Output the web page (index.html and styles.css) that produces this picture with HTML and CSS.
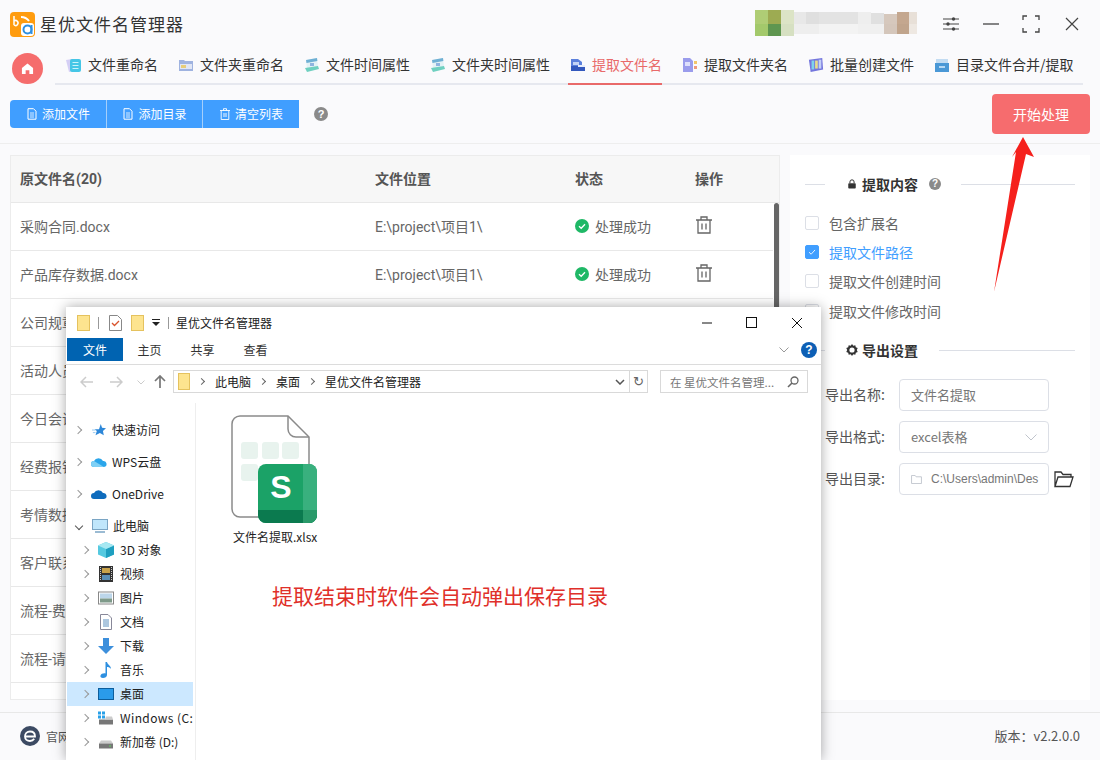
FILE: index.html
```html
<!DOCTYPE html>
<html lang="zh">
<head>
<meta charset="utf-8">
<title>星优文件名管理器</title>
<link rel="stylesheet" href="styles.css">
</head>
<body>
<div class="app">
  <header class="titlebar">
    <svg class="logo" viewBox="0 0 25 25"><rect width="25" height="25" rx="4" fill="#ff9c0f"/><rect x="11" y="11" width="13" height="13" rx="3" fill="#fff"/><circle cx="17.5" cy="17.5" r="4" fill="none" stroke="#2f8fe0" stroke-width="2"/><path d="M21.5 13v9" stroke="#2f8fe0" stroke-width="2"/><path d="M4 4v9M4 9a2.500 2.500 0 1 1 0 4" stroke="#fff" stroke-width="1.500" fill="none"/><path d="M11 5q5 0 8 4" stroke="#fff" stroke-width="2" fill="none"/></svg>
    <span class="app-name">星优文件名管理器</span>
    <svg class="mosaic" viewBox="0 0 151 26" preserveAspectRatio="none" shape-rendering="crispEdges">
      <rect x="0" y="0" width="12" height="14" fill="#afcd75"/><rect x="12" y="0" width="12" height="14" fill="#9dab52"/><rect x="24" y="0" width="12" height="14" fill="#dce4c6"/><rect x="36" y="2" width="12" height="12" fill="#e8e8e8"/><rect x="48" y="2" width="12" height="12" fill="#dfdfdf"/><rect x="60" y="2" width="36" height="12" fill="#e3e3e3"/><rect x="96" y="2" width="12" height="12" fill="#eeeeee"/><rect x="108" y="3" width="12" height="11" fill="#e0e0e0"/><rect x="120" y="4" width="12" height="10" fill="#d6c8bd"/><rect x="132" y="2" width="12" height="12" fill="#c4a78f"/><rect x="144" y="2" width="7" height="12" fill="#e8e0d8"/>
      <rect x="0" y="14" width="12" height="12" fill="#a3c96b"/><rect x="12" y="14" width="12" height="12" fill="#5f9650"/><rect x="24" y="14" width="12" height="12" fill="#d6e0c2"/><rect x="36" y="14" width="24" height="10" fill="#eeeeee"/><rect x="60" y="14" width="36" height="10" fill="#f3f3f3"/><rect x="96" y="14" width="24" height="10" fill="#f0f0f0"/><rect x="120" y="14" width="12" height="10" fill="#d4c6bb"/><rect x="132" y="14" width="12" height="10" fill="#c0a48c"/><rect x="144" y="14" width="7" height="10" fill="#eee8e2"/>
    </svg>
    <svg class="win-btn sliders" viewBox="0 0 16 16"><path d="M0 3h16M0 8h16M0 13h16" stroke="#444" stroke-width="1.200"/><circle cx="10.500" cy="3" r="1.700" fill="#444"/><circle cx="5" cy="8" r="1.700" fill="#444"/><circle cx="10.500" cy="13" r="1.700" fill="#444"/></svg>
    <svg class="win-btn minimize" viewBox="0 0 16 16"><path d="M0 8h16" stroke="#444" stroke-width="1.300"/></svg>
    <svg class="win-btn expand" viewBox="0 0 18 18"><path d="M5 1H1v4M13 1h4v4M5 17H1v-4M13 17h4v-4" fill="none" stroke="#444" stroke-width="1.300"/></svg>
    <svg class="win-btn closer" viewBox="0 0 14 14"><path d="M1 1l12 12M13 1L1 13" stroke="#444" stroke-width="1.200"/></svg>
  </header>

  <nav class="tabbar">
    <div class="home"><svg viewBox="0 0 14 14" class="home-icon"><path d="M7 1.500L13 6.500V13H9V9H5v4H1V6.500Z" fill="#fff"/></svg></div>
    <div class="tabs">
      <a class="tab"><svg class="tab-icon" viewBox="0 0 16 16"><path d="M0 3l6-1 1 12-4 1Z" fill="#d5cff5"/><rect x="4" y="2" width="11" height="13" rx="2" fill="#45c6e6"/><path d="M6.500 5.500h6M6.500 8.500h6M6.500 11.500h6" stroke="#c9f3fb" stroke-width="1"/></svg>文件重命名</a>
      <a class="tab"><svg class="tab-icon" viewBox="0 0 16 16"><path d="M1 3h5l1 1h8v10H1Z" fill="#9fb3e0"/><rect x="2" y="7" width="12" height="5" fill="#e0e6f5"/><rect x="3" y="8" width="5" height="3" fill="#e6cd7a"/></svg>文件夹重命名</a>
      <a class="tab"><svg class="tab-icon" viewBox="0 0 16 16"><path d="M2 3l11-2 1 9-11 2Z" fill="#e4f2f6"/><path d="M2 3l11-2 .4 3L2.500 6Z" fill="#6fb0d4"/><path d="M1 11l13-2 1 3-12 3Z" fill="#6fd0c0"/><rect x="6" y="6" width="4" height="3" fill="#8fb4df"/></svg>文件时间属性</a>
      <a class="tab"><svg class="tab-icon" viewBox="0 0 16 16"><path d="M2 3l11-2 1 9-11 2Z" fill="#e4f2f6"/><path d="M2 3l11-2 .4 3L2.500 6Z" fill="#6fb0d4"/><path d="M1 11l13-2 1 3-12 3Z" fill="#6fd0c0"/><rect x="6" y="6" width="4" height="3" fill="#8fb4df"/></svg>文件夹时间属性</a>
      <a class="tab tab-on"><svg class="tab-icon" viewBox="0 0 16 16"><path d="M1 2h7l4 3v6H1Z" fill="#5b80dc"/><path d="M3 5h6v3H3Z" fill="#c3d3f6"/><path d="M1 9h14v5H1Z" fill="#3358bd"/><path d="M8 8h7v2H8Z" fill="#e6ecfb"/></svg>提取文件名</a>
      <a class="tab"><svg class="tab-icon" viewBox="0 0 16 16"><path d="M1 1h7l3 3v11H1Z" fill="#9a9cec"/><path d="M3 5h5v4H3Z" fill="#dddffb"/><rect x="12" y="4" width="3" height="3" fill="#f2c56a"/><rect x="12" y="9" width="3" height="3" fill="#ee9a7e"/></svg>提取文件夹名</a>
      <a class="tab"><svg class="tab-icon" viewBox="0 0 18 18"><path d="M1 3l15-2 1 13-14 3Z" fill="#7476dd"/><rect x="4" y="4" width="3" height="10" fill="#7fd3ea"/><rect x="8" y="4" width="3" height="9" fill="#e8dc8c"/><rect x="12" y="3" width="3" height="10" fill="#c3d0f7"/></svg>批量创建文件</a>
      <a class="tab"><svg class="tab-icon" viewBox="0 0 16 16"><path d="M2 2h12v5H2Z" fill="#c3dcf2"/><path d="M1 6h14v9H1Z" fill="#4a98d6"/><rect x="5" y="9" width="6" height="2" fill="#b5d8f4"/></svg>目录文件合并/提取</a>
    </div>
  </nav>

  <section class="toolbar">
    <div class="btn-group">
      <button class="tool-btn"><svg class="btn-icon" viewBox="0 0 12 12"><path d="M2 .700h5.500L10 3.200v8H2Z" fill="none" stroke="#fff"/><path d="M4 5h4M4 7h4M4 9h4" stroke="#fff" stroke-width=".8"/></svg>添加文件</button>
      <button class="tool-btn"><svg class="btn-icon" viewBox="0 0 12 12"><path d="M2 .700h5.500L10 3.200v8H2Z" fill="none" stroke="#fff"/><path d="M4 5h4M4 7h4M4 9h4" stroke="#fff" stroke-width=".8"/></svg>添加目录</button>
      <button class="tool-btn"><svg class="btn-icon" viewBox="0 0 12 12"><path d="M1 2.500h10M4.500 2.500V.700h3v1.800M2.200 2.500v9h7.600v-9M5 5v4M7 5v4" fill="none" stroke="#fff" stroke-width=".9"/></svg>清空列表</button>
    </div>
    <span class="help-dot">?</span>
    <button class="start-btn">开始处理</button>
  </section>

  <main class="content">
    <section class="file-table">
      <div class="head-row">
        <span>原文件名(20)</span><span>文件位置</span><span>状态</span><span>操作</span>
      </div>
      <div class="table-body">
        <div class="rows">
          <div class="row"><span>采购合同.docx</span><span>E:\project\项目1\</span><span class="status"><svg class="ok" viewBox="0 0 14 14"><circle cx="7" cy="7" r="7" fill="#1fb866"/><path d="M4 7.200l2.200 2.100L10 5.200" fill="none" stroke="#fff" stroke-width="1.300"/></svg>处理成功</span><svg class="trash" viewBox="0 0 18 18"><path d="M1 4h16M6 4V1h6v3M3 4v13h12V4M7 7.500v6M11 7.500v6" fill="none" stroke="#666" stroke-width="1.300"/></svg></div>
          <div class="row"><span>产品库存数据.docx</span><span>E:\project\项目1\</span><span class="status"><svg class="ok" viewBox="0 0 14 14"><circle cx="7" cy="7" r="7" fill="#1fb866"/><path d="M4 7.200l2.200 2.100L10 5.200" fill="none" stroke="#fff" stroke-width="1.300"/></svg>处理成功</span><svg class="trash" viewBox="0 0 18 18"><path d="M1 4h16M6 4V1h6v3M3 4v13h12V4M7 7.500v6M11 7.500v6" fill="none" stroke="#666" stroke-width="1.300"/></svg></div>
          <div class="row"><span>公司规章制度.docx</span></div>
          <div class="row"><span>活动人员名单.xlsx</span></div>
          <div class="row"><span>今日会议记录.docx</span></div>
          <div class="row"><span>经费报销明细.xlsx</span></div>
          <div class="row"><span>考情数据统计.xlsx</span></div>
          <div class="row"><span>客户联系方式.xlsx</span></div>
          <div class="row"><span>流程-费用报销.docx</span></div>
          <div class="row"><span>流程-请假申请.docx</span></div>
        </div>
        <div class="scrollbar"></div>
      </div>
    </section>

    <aside class="panel">
      <div class="sec-head">
        <i class="rule rule-short"></i>
        <svg class="sec-icon" viewBox="0 0 12 12"><path d="M3.500 5V3.500a2.500 2.500 0 0 1 5 0V5" fill="none" stroke="#333" stroke-width="1.200"/><rect x="1.500" y="5" width="9" height="6.500" rx="1" fill="#333"/></svg>
        <b class="sec-title">提取内容</b>
        <span class="help-dot help-small">?</span>
        <i class="rule rule-long"></i>
      </div>
      <div class="checks">
        <label class="check"><i class="box"></i>包含扩展名</label>
        <label class="check check-on"><i class="box box-on"><svg viewBox="0 0 14 14"><path d="M3.500 7.200l2.500 2.400 4.500-5" fill="none" stroke="#fff" stroke-width="1"/></svg></i>提取文件路径</label>
        <label class="check"><i class="box"></i>提取文件创建时间</label>
        <label class="check"><i class="box"></i>提取文件修改时间</label>
      </div>
      <div class="sec-head sec-export">
        <i class="rule rule-short"></i>
        <svg class="sec-icon gear" viewBox="0 0 12 12"><path d="M6 0l1.300 1.700 2-.5.500 2 1.900.8-.9 2 .9 2-1.900.8-.5 2-2-.5L6 12l-1.300-1.700-2 .5-.5-2-1.900-.8.900-2-.9-2 1.900-.8.500-2 2 .5Z" fill="#333"/><circle cx="6" cy="6" r="2.600" fill="#fff"/></svg>
        <b class="sec-title">导出设置</b>
        <i class="rule rule-long"></i>
      </div>
      <div class="form">
        <div class="form-row"><span class="form-label">导出名称:</span><div class="field">文件名提取</div></div>
        <div class="form-row"><span class="form-label">导出格式:</span><div class="field field-select">excel表格<svg class="chev" viewBox="0 0 12 7"><path d="M.5.500L6 6 11.500.500" fill="none" stroke="#c0c4cc"/></svg></div></div>
        <div class="form-row"><span class="form-label">导出目录:</span><div class="field field-path"><svg class="mini-folder" viewBox="0 0 12 10"><path d="M.5.500h4l1 1.500h6v7.500H.5Z" fill="none" stroke="#c0c4cc"/></svg><span class="path-text">C:\Users\admin\Des</span></div><svg class="open-folder" viewBox="0 0 20 17"><path d="M1 15.500V1h6l2 2.500h8V6M1 15.500L4 6h15l-3 9.500Z" fill="none" stroke="#333" stroke-width="1.300"/></svg></div>
      </div>
    </aside>
  </main>

  <footer class="footer">
    <span class="site"><svg class="site-icon" viewBox="0 0 20 20"><circle cx="10" cy="10" r="10" fill="#3c4a63"/><path d="M5 10.500h10c0-3-2-5-5-5s-5 2.200-5 5 2.200 4.500 5 4.500c1.800 0 3.300-.8 4.200-2.200" fill="none" stroke="#fff" stroke-width="1.800"/></svg>官网</span>
    <span class="version">版本：v2.2.0.0</span>
  </footer>
</div>

<div class="explorer">
  <div class="ex-title">
    <i class="yfolder"></i><i class="ex-sep"></i>
    <svg class="ex-check" viewBox="0 0 13 16"><path d="M.500.500h8l4 4v11H.500Z" fill="#fff" stroke="#888"/><path d="M3 8l2.500 2.500L10 6" fill="none" stroke="#d9532c" stroke-width="1.300"/></svg>
    <i class="yfolder"></i>
    <svg class="ex-drop" viewBox="0 0 8 7"><path d="M0 0h8v1H0ZM0 3h8L4 7Z" fill="#222"/></svg>
    <i class="ex-sep"></i>
    <span class="ex-name">星优文件名管理器</span>
    <svg class="ex-win ex-min" viewBox="0 0 12 12"><path d="M1 6h10" stroke="#111" stroke-width="1"/></svg>
    <svg class="ex-win ex-max" viewBox="0 0 11 11"><rect x=".5" y=".5" width="10" height="10" fill="none" stroke="#111"/></svg>
    <svg class="ex-win ex-close" viewBox="0 0 12 12"><path d="M1 1l10 10M11 1L1 11" stroke="#111" stroke-width="1"/></svg>
  </div>
  <div class="ribbon">
    <span class="rib-tab rib-on">文件</span>
    <span class="rib-tab">主页</span>
    <span class="rib-tab">共享</span>
    <span class="rib-tab">查看</span>
    <svg class="rib-chev" viewBox="0 0 10 6"><path d="M.5.500L5 5 9.500.500" fill="none" stroke="#999"/></svg>
    <span class="rib-help">?</span>
  </div>
  <div class="addr-row">
    <svg class="nav-arrow" viewBox="0 0 14 12"><path d="M1 6h12M6 1L1 6l5 5" fill="none" stroke="#ccc" stroke-width="1.500"/></svg>
    <svg class="nav-arrow" viewBox="0 0 14 12"><path d="M13 6H1M8 1l5 5-5 5" fill="none" stroke="#ccc" stroke-width="1.500"/></svg>
    <svg class="nav-down" viewBox="0 0 8 5"><path d="M.5.500L4 4 7.500.500" fill="none" stroke="#ccc"/></svg>
    <svg class="nav-up" viewBox="0 0 12 14"><path d="M6 13V1M1 6l5-5 5 5" fill="none" stroke="#777" stroke-width="1.700"/></svg>
    <div class="addr">
      <i class="yfolder yfolder-big"></i>
      <i class="crumb-sep"></i><span>此电脑</span><i class="crumb-sep"></i><span>桌面</span><i class="crumb-sep"></i><span>星优文件名管理器</span>
      <svg class="addr-chev" viewBox="0 0 10 6"><path d="M1 1l4 4 4-4" fill="none" stroke="#555" stroke-width="1.500"/></svg>
      <span class="addr-refresh">↻</span>
    </div>
    <div class="search"><span>在 星优文件名管理...</span><svg class="search-icon" viewBox="0 0 12 12"><circle cx="7.500" cy="4.500" r="3.500" fill="none" stroke="#666" stroke-width="1.300"/><path d="M5 7l-4 4" stroke="#666" stroke-width="1.600"/></svg></div>
  </div>
  <div class="ex-body">
    <div class="nav-pane">
      <div class="nav-row top"><i class="chev-r"></i><svg class="nav-icon" viewBox="0 0 16 16"><path d="M10 1l1.500 4.500L16 6l-3.500 3 1 5L9 11.500 4 14l1.500-5L3 7h5Z" fill="#2d87d8"/><path d="M0 8h4M1 11h3" stroke="#8dc3ee"/></svg>快速访问</div>
      <div class="nav-row top gap"><i class="chev-r"></i><svg class="nav-icon" viewBox="0 0 16 12"><path d="M3 11a3 3 0 0 1 0-6 5 5 0 0 1 9 0 3 3 0 0 1 1 6Z" fill="#2aa5ea"/><path d="M3 11a3 3 0 0 1 0-6l10 6Z" fill="#7fd0f5"/></svg>WPS云盘</div>
      <div class="nav-row top gap"><i class="chev-r"></i><svg class="nav-icon" viewBox="0 0 16 12"><path d="M3 11a3 3 0 0 1 0-6 5 5 0 0 1 9 0 3 3 0 0 1 1 6Z" fill="#0f6cbd"/></svg>OneDrive</div>
      <div class="nav-row top gap"><i class="chev-d"></i><svg class="nav-icon" viewBox="0 0 16 14"><rect x=".5" y=".5" width="15" height="10" fill="#bfe6fb" stroke="#7aa5c4"/><path d="M3 13h10" stroke="#7aa5c4" stroke-width="1.500"/></svg>此电脑</div>
      <div class="nav-row child"><i class="chev-r"></i><svg class="nav-icon2" viewBox="0 0 16 16"><path d="M8 0l8 3.500v9L8 16l-8-3.500v-9Z" fill="#55c9e0"/><path d="M8 7l8-3.500v9L8 16Z" fill="#1e9fc0"/><path d="M8 7L0 3.500 8 0l8 3.500Z" fill="#a6e8f2"/></svg>3D 对象</div>
      <div class="nav-row child"><i class="chev-r"></i><svg class="nav-icon2" viewBox="0 0 14 16"><rect width="14" height="16" fill="#333"/><rect x="3" y="2" width="8" height="5" fill="#c9a24a"/><rect x="3" y="9" width="8" height="5" fill="#5a8fb8"/><path d="M1.500 1v14M12.500 1v14" stroke="#ccc" stroke-dasharray="1 1"/></svg>视频</div>
      <div class="nav-row child"><i class="chev-r"></i><svg class="nav-icon2" viewBox="0 0 16 13"><rect x=".5" y=".5" width="15" height="12" fill="#fff" stroke="#888"/><rect x="2" y="2" width="12" height="5" fill="#bcd6ea"/><rect x="2" y="7" width="12" height="4" fill="#7f9a8a"/></svg>图片</div>
      <div class="nav-row child"><i class="chev-r"></i><svg class="nav-icon2" viewBox="0 0 12 16"><path d="M.5.500h7.500l3.500 3.500v11.500H.5Z" fill="#fff" stroke="#889"/><path d="M3 6h6M3 8h6M3 10h6M3 12h6" stroke="#5b8fbf"/></svg>文档</div>
      <div class="nav-row child"><i class="chev-r"></i><svg class="nav-icon2" viewBox="0 0 16 16"><path d="M5 0h6v8h5l-8 8-8-8h5Z" fill="#3c8fdc"/></svg>下载</div>
      <div class="nav-row child"><i class="chev-r"></i><svg class="nav-icon2" viewBox="0 0 12 16"><path d="M5.500 0h1.500c.5 3 4 3.500 4 7-1-1.500-2.500-2-4-2v8c0 2-2 3-4 3s-3-1-2.500-2.500S3.500 11 5.500 11.500Z" fill="#2d8fe0"/></svg>音乐</div>
      <div class="nav-row child nav-sel"><i class="chev-r"></i><svg class="nav-icon2" viewBox="0 0 16 12"><rect x=".5" y=".5" width="15" height="11" fill="#2a9bea" stroke="#0d5e9c"/></svg>桌面</div>
      <div class="nav-row child"><i class="chev-r"></i><svg class="nav-icon2" viewBox="0 0 16 13"><rect y="0" width="3" height="3" fill="#28a0e8"/><rect x="4" y="0" width="3" height="3" fill="#28a0e8"/><rect y="4" width="3" height="3" fill="#28a0e8"/><rect x="4" y="4" width="3" height="3" fill="#28a0e8"/><path d="M1 8h14v5H1Z" fill="#777"/><path d="M8 5h6l1 3H7Z" fill="#ccc"/></svg><span class="drive-c">Windows (C:</span></div>
      <div class="nav-row child"><i class="chev-r"></i><svg class="nav-icon2" viewBox="0 0 16 13"><path d="M3 5h10l2 3H1Z" fill="#ccc"/><path d="M1 8h14v5H1Z" fill="#777"/><rect x="11" y="10" width="2" height="1" fill="#5fd35f"/></svg>新加卷 (D:)</div>
    </div>
    <div class="files">
      <div class="file-item">
        <svg class="xlsx" viewBox="0 0 88 110">
          <path d="M9 1H57L78 22V94a8 8 0 0 1-8 8H9a8 8 0 0 1-8-8V9a8 8 0 0 1 8-8Z" fill="#fff" stroke="#8a8a8a" stroke-width="1.500"/>
          <path d="M57 1V14a8 8 0 0 0 8 8H78" fill="none" stroke="#8a8a8a" stroke-width="1.500"/>
          <rect x="10" y="27" width="17" height="17" rx="3" fill="#e8f3ee"/><rect x="31" y="27" width="17" height="17" rx="3" fill="#e8f3ee"/><rect x="51" y="27" width="17" height="17" rx="3" fill="#e8f3ee"/><rect x="10" y="49" width="17" height="17" rx="3" fill="#e8f3ee"/>
          <rect x="27" y="49" width="59" height="59" rx="8" fill="#1ba267"/>
          <path d="M72 49h6a8 8 0 0 1 8 8v43a8 8 0 0 1-8 8h-6Z" fill="#39b07e"/>
          <path d="M27 95h59v5a8 8 0 0 1-8 8H35a8 8 0 0 1-8-8Z" fill="#0b7a4f"/>
          <path d="M72 95h14v5a8 8 0 0 1-8 8h-6Z" fill="#2a9a6a"/>
          <text x="50" y="83" class="xlsx-s">S</text>
        </svg>
        <span class="file-label">文件名提取.xlsx</span>
      </div>
      <p class="note">提取结束时软件会自动弹出保存目录</p>
    </div>
  </div>
</div>

<svg class="arrow" viewBox="0 0 50 160"><path d="M29 0L40 20 32 17 0 155 22 15 18 20Z" fill="#f5201c"/></svg>
</body>
</html>
```

FILE: styles.css
```css
* { box-sizing: border-box; }
html, body { margin: 0; height: 100%; }
body {
  width: 1100px; height: 760px; overflow: hidden; position: relative;
  background: #fafafc; color: #333;
  font-family: "Noto Sans CJK SC", "Liberation Sans", sans-serif;
  font-size: 14px;
}
.app { display: flex; flex-direction: column; height: 760px; }

/* title bar */
.titlebar { height: 48px; display: flex; align-items: center; padding-left: 10px; flex: none; }
.logo { width: 25px; height: 25px; flex: none; }
.app-name { margin-left: 5px; margin-top: -2px; font-size: 17px; letter-spacing: 1px; color: #333; }
.mosaic { width: 162px; height: 26px; margin-left: auto; margin-top: -2px; }
.win-btn { flex: none; }
.sliders { width: 16px; height: 16px; margin-left: 26px; }
.minimize { width: 16px; height: 16px; margin-left: 24px; }
.expand { width: 18px; height: 18px; margin-left: 23px; }
.closer { width: 14px; height: 14px; margin-left: 25px; margin-right: 21px; }

/* tabs */
.tabbar { height: 37px; display: flex; padding-left: 12px; flex: none; }
.home { width: 31px; height: 31px; border-radius: 50%; background: #f56c6c; display: flex; align-items: center; justify-content: center; margin-top: 5px; flex: none; }
.home-icon { width: 13px; height: 13px; }
.tabs { margin-left: 12px; width: 1028px; padding-left: 9px; display: flex; gap: 18px; border-bottom: 2px solid #e6e8ef; height: 37px; }
.tab { display: flex; align-items: center; height: 37px; padding: 0 0 3px 2px; font-size: 14px; color: #333; border-bottom: 2px solid transparent; white-space: nowrap; }
.tab-icon { width: 16px; height: 16px; margin: 2px 6px 0 0; flex: none; }
.tab-on { color: #e96a6a; border-bottom-color: #e96a6a; }

/* toolbar */
.toolbar { height: 59px; display: flex; align-items: center; padding: 0 10px; border-bottom: 1px solid #eeeeee; flex: none; }
.btn-group { display: flex; height: 28px; margin-top: -1px; }
.tool-btn { width: 96px; height: 28px; border: 0; border-right: 1px solid #a5cffb; background: #409eff; color: #fff; font: inherit; font-size: 12px; display: flex; align-items: center; justify-content: center; padding: 0; }
.tool-btn:first-child { border-radius: 4px 0 0 4px; width: 97px; }
.tool-btn:last-child { border-right: 0; }
.btn-icon { width: 12px; height: 12px; margin-right: 4px; }
.help-dot { width: 14px; height: 14px; border-radius: 50%; background: #8a8a8a; color: #fff; font-size: 11px; line-height: 14px; text-align: center; font-weight: 700; margin-left: 15px; font-family: "Liberation Sans", sans-serif; }
.start-btn { margin-left: auto; width: 98px; height: 40px; border: 0; border-radius: 4px; background: #f66c6e; color: #fff; font: inherit; font-size: 14px; }

/* main */
.content { display: flex; gap: 10px; padding: 11px 10px 0; flex: none; height: 568px; }
.file-table { width: 770px; height: 545px; border: 1px solid #ececec; background: #fff; overflow: hidden; flex: none; font-family: Roboto, "Noto Sans CJK SC", sans-serif; }
.head-row { height: 47px; display: grid; grid-template-columns: 355px 200px 120px 1fr; align-items: center; padding: 0 0 2px 9px; background: #f7f7f7; border-bottom: 1px solid #e8e8e8; font-weight: 700; color: #555; }
.table-body { display: flex; height: 497px; }
.rows { width: 762px; }
.row { height: 48px; display: grid; grid-template-columns: 355px 200px 120px 1fr; align-items: center; padding: 0 0 2px 9px; border-bottom: 1px solid #e8e8e8; color: #666; }
.status { display: flex; align-items: center; }
.ok { width: 14px; height: 14px; margin-right: 6px; }
.trash { width: 18px; height: 18px; margin-top: -2px; }
.scrollbar { width: 5px; height: 200px; margin-left: 1px; background: #666; border-radius: 3px 3px 0 0; }

/* side panel */
.panel { width: 300px; height: 545px; background: #fff; padding: 20px 15px 0; flex: none; }
.sec-head { height: 18px; display: flex; align-items: center; }
.rule { height: 1px; background: #dcdfe6; display: block; }
.rule-short { width: 20px; margin-right: 22px; }
.rule-long { flex: 1; margin-left: 20px; }
.sec-icon { width: 10px; height: 10px; margin-right: 5px; }
.gear { width: 12px; height: 12px; margin-left: -1px; margin-right: 4px; }
.sec-title { font-size: 14px; color: #333; }
.help-small { width: 12px; height: 12px; line-height: 12px; font-size: 10px; margin-left: 11px; margin-right: 0; flex: none; }
.sec-export .rule-long { margin-left: 21px; }
.checks { margin-top: 15px; }
.check { height: 29.33px; display: flex; align-items: center; color: #666; font-size: 14px; }
.box { width: 14px; height: 14px; border: 1px solid #dcdfe6; border-radius: 2px; background: #fff; margin-right: 10px; flex: none; display: block; }
.box-on { background: #409eff; border-color: #409eff; padding: 0; }
.box-on svg { display: block; width: 12px; height: 12px; }
.check-on { color: #409eff; }
.sec-export { margin-top: 16px; }
.form { margin-top: 20px; padding-left: 20px; display: flex; flex-direction: column; gap: 10px; }
.form-row { display: flex; align-items: center; height: 32px; }
.form-label { width: 74px; color: #555; flex: none; margin-top: -2px; }
.field { width: 150px; height: 32px; border: 1px solid #dcdfe6; border-radius: 4px; background: #fff; padding: 0 11px 2px; display: flex; align-items: center; color: #777; font-size: 13px; flex: none; overflow: hidden; white-space: nowrap; }
.field-select { justify-content: space-between; }
.chev { width: 12px; height: 7px; margin: 2px 0 0; }
.mini-folder { width: 11px; height: 9px; margin: 2px 9px 0 0; flex: none; }
.path-text { color: #777; font-family: "Liberation Sans", sans-serif; font-size: 12px; margin-top: 2px; }
.open-folder { width: 20px; height: 17px; margin-left: 5px; flex: none; }

/* footer */
.footer { flex: 1; border-top: 1px solid #e8e8e8; display: flex; align-items: center; justify-content: space-between; padding: 0 20px 1px; background: #fafafc; }
.site { display: flex; align-items: center; color: #555; font-size: 12px; }
.site-icon { width: 20px; height: 20px; margin-right: 6px; }
.version { color: #555; font-size: 13px; margin-top: -2px; }

/* explorer window */
.explorer { position: absolute; left: 66px; top: 307px; width: 755px; height: 453px; background: #fff; box-shadow: 0 0 12px rgba(0,0,0,.35); display: flex; flex-direction: column; font-size: 12px; color: #222; }
.ex-title { height: 31px; display: flex; align-items: center; padding-left: 11px; flex: none; }
.yfolder { display: block; width: 13px; height: 16px; background: #fde48f; border: 1px solid #e5c25e; flex: none; }
.yfolder-big { width: 12px; height: 17px; }
.ex-sep { display: block; width: 1px; height: 12px; background: #999; margin: 0 10px 0 8px; flex: none; }
.ex-check { width: 13px; height: 16px; margin-right: 9px; flex: none; }
.ex-drop { width: 8px; height: 7px; margin-left: 8px; flex: none; }
.ex-name { color: #222; margin-left: -3px; margin-top: -1px; }
.ex-win { flex: none; }
.ex-min { width: 12px; height: 12px; margin-left: auto; }
.ex-max { width: 11px; height: 11px; margin-left: 33px; }
.ex-close { width: 12px; height: 12px; margin-left: 34px; margin-right: 18px; }
.ribbon { height: 27px; display: flex; align-items: flex-start; padding-left: 1px; border-bottom: 1px solid #dcdcdc; flex: none; }
.rib-tab { width: 53px; height: 23px; line-height: 23px; text-align: center; color: #333; }
.rib-on { width: 56px; background: #0063b1; color: #fff; }
.rib-chev { width: 10px; height: 6px; margin-left: auto; margin-top: 9px; }
.rib-help { width: 16px; height: 16px; border-radius: 50%; background: #0d5fb5; color: #fff; font: 700 12px/16px "Liberation Sans", sans-serif; text-align: center; margin: 4px 4px 0 12px; }
.addr-row { height: 38px; display: flex; align-items: flex-start; padding: 5px 13px 0 14px; flex: none; }
.nav-arrow { width: 14px; height: 12px; margin: 6px 15px 0 0; flex: none; }
.nav-down { width: 8px; height: 5px; margin: 10px 9px 0 -1px; flex: none; }
.nav-up { width: 12px; height: 14px; margin: 5px 7px 0 0; flex: none; }
.addr { width: 475px; height: 23px; border: 1px solid #d9d9d9; display: flex; align-items: center; padding-left: 4px; flex: none; }
.crumb-sep { display: block; width: 5px; height: 5px; border: solid #666; border-width: 1px 1px 0 0; transform: rotate(45deg); margin: 0 11px 0 9px; flex: none; }
.yfolder-big + .crumb-sep { margin-left: 9px; }
.addr-chev { width: 10px; height: 6px; margin-left: auto; }
.addr-refresh { width: 18px; height: 21px; line-height: 21px; margin-left: 4px; border-left: 1px solid #d9d9d9; text-align: center; color: #666; font-family: "DejaVu Sans", sans-serif; font-size: 13px; }
.search { width: 148px; height: 23px; border: 1px solid #d9d9d9; margin-left: 12px; display: flex; align-items: center; justify-content: space-between; padding: 0 8px 0 9px; color: #777; font-size: 11.500px; white-space: nowrap; overflow: hidden; flex: none; }
.search-icon { width: 12px; height: 12px; flex: none; }
.ex-body { flex: 1; display: flex; min-height: 0; }
.nav-pane { width: 130px; padding: 15px 2px 0 1px; border-right: 1px solid #eeeeee; overflow: hidden; flex: none; }
.nav-row { height: 24px; display: flex; align-items: center; color: #222; white-space: nowrap; overflow: hidden; padding-bottom: 1px; }
.gap { margin-top: 8px; }
.top { padding-left: 8px; }
.child { padding-left: 15px; }
.chev-r { width: 6px; height: 6px; border: solid #999; border-width: 1.500px 1.500px 0 0; transform: rotate(45deg); flex: none; display: block; margin-right: 10px; }
.chev-d { width: 6px; height: 6px; border: solid #555; border-width: 0 1.500px 1.500px 0; transform: rotate(45deg); flex: none; display: block; margin-right: 10px; margin-left: 1px; }
.nav-icon { width: 16px; height: 14px; margin-right: 5px; flex: none; }
.nav-icon2 { width: 16px; height: 16px; margin-right: 6px; flex: none; }
.nav-sel { background: #cce8ff; }
.drive-c { letter-spacing: .4px; }
.files { flex: 1; padding: 12px 0 0 29px; }
.file-item { width: 100px; display: flex; flex-direction: column; align-items: flex-start; }
.xlsx { width: 88px; height: 110px; margin-left: 6px; display: block; }
.xlsx-s { font: 700 32px "Liberation Sans", sans-serif; fill: #fff; text-anchor: middle; }
.file-label { font-size: 12px; white-space: nowrap; color: #222; margin: 3px 0 0 8px; line-height: 17px; }
.note { margin: 35px 0 0 47px; color: #e0302a; font-size: 21px; line-height: 30px; white-space: nowrap; }

.arrow { position: absolute; left: 994px; top: 137px; width: 50px; height: 160px; }
```
